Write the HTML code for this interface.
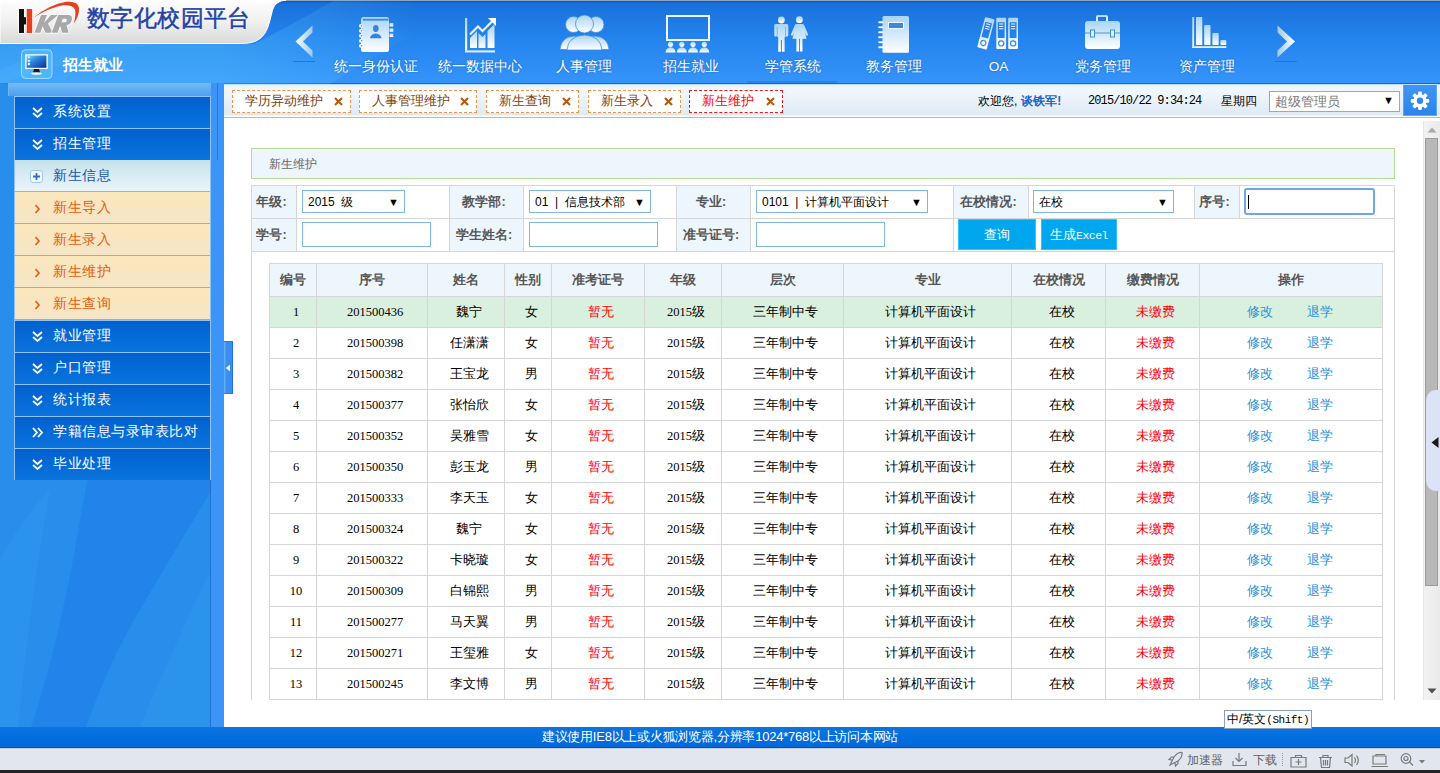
<!DOCTYPE html>
<html><head><meta charset="utf-8">
<style>
*{margin:0;padding:0;box-sizing:border-box}
html,body{width:1440px;height:773px;overflow:hidden;font-family:"Liberation Sans",sans-serif;font-size:12px;color:#000;background:#fff}
.abs{position:absolute}
#hdr{position:absolute;left:0;top:0;width:1440px;height:84px;background:linear-gradient(#8aa4c4 0px,#8aa4c4 1px,#0f5ec4 1px,#0f5ec4 2px,#1a70da 3px,#2484ee 40px,#3594fa 82px)}
#hdr:after{content:"";position:absolute;left:0;right:0;bottom:0;height:1px;background:#1a66c8}
#logo{position:absolute;left:0;top:0;width:300px;height:44px}
.nav{position:absolute;top:0;width:104px;height:83px;text-align:center;color:#fff;font-size:13.6px}
.nav .lb{position:absolute;left:0;right:0;top:58px;line-height:18px;text-shadow:0 0 2px rgba(0,40,120,.5)}
.nav svg{position:absolute;left:0;top:0}
#side{position:absolute;left:0;top:84px;width:224px;height:643px;background:#2284e8}

#spanel{position:absolute;left:8px;top:83px;width:210px;height:13px;background:linear-gradient(#74bcf6,#4c9ff0);border-left:1px solid #70b8f4}
.mi{position:absolute;left:14px;width:197px;height:32px;font-size:14px;letter-spacing:0.5px;line-height:29px;color:#fff;padding-left:38px;white-space:nowrap}
.mb{background:linear-gradient(#0060d0,#0a74dc);border:1px solid #8ec4f4;border-bottom:none}
.mx{line-height:31px;background:linear-gradient(#c6e2ea,#eaf5fb);color:#1a52a8;border-left:1px solid #8ec4f4;border-right:1px solid #8ec4f4;border-bottom:1px solid #9ab8b0}
.mo{line-height:31px;background:linear-gradient(#fbe8bc,#f6e4c8);color:#e25c0e;border-left:1px solid #8ec4f4;border-right:1px solid #8ec4f4;border-bottom:1px solid #d8a070}
#tabbar{position:absolute;left:224px;top:84px;width:1216px;height:34px;background:linear-gradient(#a8d4f8 0px,#e8f2fc 1.5px,#f2f7fd 5px,#deeaf6 31px,#ffffff 32px,#ffffff 33px);border-bottom:1px solid #90c4f0}
.tab{position:absolute;top:90px;height:23px;border:1px dashed #f29448;background:#fff;color:#7a4212;font-size:12.5px;line-height:21px;padding-left:12px}
.tab b{position:absolute;right:7px;top:6px;width:9px;height:9px;line-height:0}
.tab b svg{display:block}
#main{position:absolute;left:224px;top:118px;width:1216px;height:609px;background:#fff}
#foot{position:absolute;left:0;top:727px;width:1440px;height:21px;background:linear-gradient(#0a74e2,#0068da);color:#fff;text-align:center;font-size:13px;letter-spacing:-0.25px;line-height:20px;border-bottom:1px solid #0050b8}
#sbar{position:absolute;left:0;top:748px;width:1440px;height:22px;background:#e2e6ee;border-top:1px solid #c8ccd4}
#blk{position:absolute;left:0;top:770px;width:1440px;height:3px;background:#222}
table{border-collapse:collapse}
.th{height:31px;line-height:31px;text-align:center;font-weight:bold;color:#555;font-size:12.5px}
.td{height:30px;line-height:30px;text-align:center;padding-left:6px;font-size:12.5px;color:#000;font-family:"Liberation Serif",serif}
.red{color:#f00}
.lk{color:#2b8fd6;width:auto!important;padding-left:0!important}


.lab{background:#eef6fd;color:#555;font-weight:bold;font-size:12.5px;text-align:center;white-space:nowrap;padding-right:5px}
.sel{height:23px;border:1px solid #7db8e0;background:#fff;font-size:12px;line-height:22px;padding-left:5px;color:#000;white-space:pre}
.sel .dd{position:absolute;right:5px;top:0;font-size:11px}
.btn{top:219px;height:31px;background:#00a6ee;border:1px solid #30c4ff;color:#fff;font-size:13px;line-height:29px;text-align:center;white-space:nowrap}
.hl{height:1px;background:#d6d6d6}
.vl{width:1px;background:#d6d6d6}
</style></head><body>
<div id="hdr"></div>
<svg class="abs" style="left:0;top:0" width="1440" height="84" viewBox="0 0 1440 84">
<defs>
<linearGradient id="lp" x1="0" y1="0" x2="0" y2="1"><stop offset="0" stop-color="#fefefe"/><stop offset=".5" stop-color="#f0f0f0"/><stop offset="1" stop-color="#d9d9d9"/></linearGradient>
<linearGradient id="ig" x1="0" y1="0" x2="0" y2="1"><stop offset="0" stop-color="#a9d4f8"/><stop offset="1" stop-color="#ffffff"/></linearGradient>
<linearGradient id="ag" x1="0" y1="0" x2="1" y2="0"><stop offset="0" stop-color="#ffffff"/><stop offset="1" stop-color="#9cc8ec"/></linearGradient>
<linearGradient id="ag2" x1="1" y1="0" x2="0" y2="0"><stop offset="0" stop-color="#ffffff"/><stop offset="1" stop-color="#9cc8ec"/></linearGradient>
<linearGradient id="sw" x1="0" y1="0" x2="1" y2="1"><stop offset="0" stop-color="#ffffff" stop-opacity=".18"/><stop offset="1" stop-color="#ffffff" stop-opacity="0"/></linearGradient>
</defs>
<linearGradient id="sw2" gradientUnits="userSpaceOnUse" x1="220" y1="70" x2="420" y2="10"><stop offset="0" stop-color="#60d0ff" stop-opacity=".30"/><stop offset=".55" stop-color="#60d0ff" stop-opacity=".14"/><stop offset="1" stop-color="#60d0ff" stop-opacity="0"/></linearGradient><path d="M0,84 L0,44 L255,44 Q300,20 335,0 L480,0 Q400,40 330,84 Z" fill="url(#sw2)"/><path d="M0,84 Q80,56 160,44 L60,44 Q20,60 0,70 Z" fill="#60d0ff" opacity=".12"/><path d="M0,0 H286 Q275,1 272.5,10 L269.5,22 Q266,36 257,40.5 Q251,43.5 240,43.5 H0 Z" fill="url(#lp)" stroke="#ffffff" stroke-width="1"/>
<!-- HKR logo -->
<g stroke="#ffffff" stroke-width="1.4" paint-order="stroke" stroke-linejoin="round">
<rect x="19" y="9" width="5" height="24" fill="#111"/>
<rect x="23.5" y="17.2" width="3" height="7.2" fill="#111" stroke="none"/>
<rect x="26.7" y="9" width="5.5" height="24" fill="#e8401c"/>
<path d="M34.4,32.8 L41.1,15 H47 L44,22.8 L51,15 H58.2 L48,23.5 L52.8,32.8 H45.6 L42.6,26.3 L40.4,32.8 Z" fill="#a9a9a9"/>
<path d="M51.7,32.8 L58.3,15 H68.5 Q72.6,15 71.9,19.6 Q71.1,24.6 66.6,25.3 L68.7,32.8 H62 L60.4,26.2 H59.9 L57.6,32.8 Z M61.5,22.2 H64.9 Q66.5,22.2 66.8,20.4 Q67.1,18.8 65.5,18.8 H62.8 Z" fill="#a9a9a9"/>
<path d="M32,18.8 Q50,4 66,1.8 Q78,0.6 79,8 Q79.6,15.5 73.5,24 Q76.3,15 75,9.5 Q73,4.8 63,5.3 Q49,7.5 32,18.8 Z" fill="#e8401c" stroke-width="1"/>
</g>
<!-- arrows -->
<path d="M312.5,25.5 L295.5,41.5 L312.5,57.5 L312.5,50.5 L303,41.5 L312.5,32.5 Z" fill="url(#ag)"/>
<rect x="293" y="61" width="22" height="1" fill="#2a5fa8" opacity=".6"/>
<path d="M1277.5,25.5 L1295,41.5 L1277.5,57.5 L1277.5,50.5 L1287,41.5 L1277.5,32.5 Z" fill="url(#ag2)"/>
<rect x="1275" y="61" width="22" height="1" fill="#2a5fa8" opacity=".6"/>
<rect x="747" y="81.5" width="90" height="1" fill="#1d5fb8" opacity=".6"/>
<g fill="url(#ig)">
<!-- 1 address book -->
<rect x="361" y="17" width="28" height="35" rx="2.5"/>
<rect x="389.5" y="23" width="3.8" height="3.6" rx=".6"/><rect x="389.5" y="28.2" width="3.8" height="3.6" rx=".6"/><rect x="389.5" y="33.4" width="3.8" height="3.6" rx=".6"/>
</g>
<g fill="#f0f8ff"><circle cx="360.8" cy="25.8" r="1.9"/><circle cx="360.8" cy="30.8" r="1.9"/><circle cx="360.8" cy="35.8" r="1.9"/><circle cx="360.8" cy="40.8" r="1.9"/><circle cx="360.8" cy="45.8" r="1.9"/></g><g fill="#4a94e0"><circle cx="361.6" cy="25.8" r=".7"/><circle cx="361.6" cy="30.8" r=".7"/><circle cx="361.6" cy="35.8" r=".7"/><circle cx="361.6" cy="40.8" r=".7"/><circle cx="361.6" cy="45.8" r=".7"/></g>
<rect x="363" y="18.8" width="25.5" height="1.8" fill="#3c88da"/>
<ellipse cx="375.8" cy="28.5" rx="2.8" ry="3.6" fill="#3784d6"/>
<path d="M370,38.3 Q370.5,34 375.8,33.6 Q381,34 381.5,38.3 Z" fill="#3784d6"/>
<!-- 2 chart -->
<g fill="url(#ig)">
<rect x="465" y="18" width="2.2" height="34"/>
<rect x="465" y="50.2" width="30" height="2.2"/>
<path d="M470,38 L477,31 L477,48 L470,48 Z"/>
<path d="M478.5,33 L482.5,37 L485.5,34 L485.5,48 L478.5,48 Z"/>
<path d="M487.5,31 L494.5,24 L494.5,48 L487.5,48 Z"/>
</g>
<polyline points="470,34.5 478,26.5 482.5,31 492,21.5" fill="none" stroke="#e6f2fd" stroke-width="2.2"/>
<path d="M488,18 L496,18 L496,26 Z" fill="#ffffff"/>
<!-- 3 people -->
<g fill="url(#ig)" stroke="#3d8ee0" stroke-width=".8">
<path d="M560,49.5 Q561,37 574,36 Q587,37 588,49.5 Z"/>
<path d="M581,49.5 Q582,37 595,36 Q608,37 609,49.5 Z"/>
<circle cx="573.5" cy="24.5" r="8"/>
<circle cx="596" cy="24.5" r="8"/>
<path d="M567,50 Q568,36 584.5,35 Q601,36 602,50 Z"/>
<circle cx="584.5" cy="24" r="9"/>
</g>
<!-- 4 screen -->
<rect x="667" y="16" width="42" height="24" fill="none" stroke="#eef6fe" stroke-width="2"/>
<g fill="url(#ig)">
<circle cx="670.5" cy="44.3" r="2.6"/><circle cx="681.8" cy="44.3" r="2.6"/><circle cx="693" cy="44.3" r="2.6"/><circle cx="704.3" cy="44.3" r="2.6"/>
<path d="M665.5,52.5 Q666,47.5 670.5,47.3 Q675,47.5 675.5,52.5 Z"/>
<path d="M676.8,52.5 Q677.3,47.5 681.8,47.3 Q686.3,47.5 686.8,52.5 Z"/>
<path d="M688,52.5 Q688.5,47.5 693,47.3 Q697.5,47.5 698,52.5 Z"/>
<path d="M699.3,52.5 Q699.8,47.5 704.3,47.3 Q708.8,47.5 709.3,52.5 Z"/>
</g>
<!-- 5 man woman -->
<g fill="url(#ig)">
<circle cx="781.4" cy="20" r="3.4"/>
<path d="M775.6,24 H787 Q788.3,24 788.3,25.4 V35.6 Q788.3,36.6 787,36.6 Q785.8,36.6 785.8,35.6 V37 H784.6 V51.8 H781.9 V40 H780.9 V51.8 H778.2 V37 H777 V35.6 Q777,36.6 775.6,36.6 Q774.3,36.6 774.3,35.6 V25.4 Q774.3,24 775.6,24 Z"/>
<circle cx="799.4" cy="19.7" r="3.4"/>
<path d="M796.4,24 H802.4 Q803.6,24 804.1,25.1 L808,34.2 Q808.4,35.4 807.2,35.6 Q806.4,35.8 806,35 L804.8,32.2 L806.6,38.7 H802.5 V51.5 H799.9 V38.7 H799 V51.5 H796.4 V38.7 H792.4 L794.2,32.2 L793,35 Q792.6,35.8 791.8,35.6 Q790.6,35.4 791,34.2 L794.9,25.1 Q795.3,24 796.4,24 Z"/>
</g>
<g stroke="#4a94e0" stroke-width=".7" opacity=".8"><path d="M777.2,27 V36.3 M785.5,27 V36.3"/></g>
<!-- 6 notebook -->
<g fill="url(#ig)">
<rect x="882.5" y="16" width="26.5" height="36.8" rx="1.5"/>
</g>
<g fill="#f4faff"><rect x="878.2" y="21.3" width="5" height="1.9" rx=".9"/><rect x="878.2" y="26.3" width="5" height="1.9" rx=".9"/><rect x="878.2" y="31.3" width="5" height="1.9" rx=".9"/><rect x="878.2" y="36.3" width="5" height="1.9" rx=".9"/><rect x="878.2" y="41.3" width="5" height="1.9" rx=".9"/><rect x="878.2" y="46.3" width="5" height="1.9" rx=".9"/></g>
<rect x="888.5" y="22.5" width="15" height="6" fill="#3b8ad9" stroke="#f0f8ff" stroke-width="1"/>
<!-- 7 binders -->
<defs><g id="bd">
<path d="M1,0.7 H9 Q9.9,0.7 9.9,1.6 V31 Q9.9,31.9 9,31.9 H1 Q0.1,31.9 0.1,31 V1.6 Q0.1,0.7 1,0.7 Z M1.6,5.2 V20.8 H8.4 V5.2 Z" fill="url(#ig)" fill-rule="evenodd"/>
<rect x="1.6" y="3.4" width="6.8" height="1.8" fill="#ffffff" opacity=".0"/>
<rect x="2.8" y="6.4" width="4.4" height="1" fill="#eaf4fd"/><rect x="2.8" y="8.8" width="4.4" height="1" fill="#eaf4fd"/><rect x="2.8" y="11.2" width="4.4" height="1" fill="#eaf4fd"/>
<circle cx="5" cy="26.3" r="2.6" fill="none" stroke="#3b8be0" stroke-width="1.2"/>
<circle cx="5" cy="26.3" r="1.1" fill="#fff"/>
</g></defs>
<g stroke="none">
<rect x="997.6" y="22.3" width="7" height="15.5" fill="none" stroke="#ffffff" stroke-width=".0"/>
</g>
<use href="#bd" transform="translate(985.3,16.3) rotate(15)"/>
<use href="#bd" transform="translate(996.2,17.1)"/>
<use href="#bd" transform="translate(1008.1,17.1)"/>
<!-- 8 briefcase -->
<g fill="url(#ig)">
<path d="M1096,21.5 V16.5 Q1096,15 1097.5,15 H1106.5 Q1108,15 1108,16.5 V21.5 H1106 V17 H1098 V21.5 Z"/>
<rect x="1085" y="21" width="35" height="28" rx="3"/>
</g>
<rect x="1085" y="32.5" width="35" height="1" fill="#4a95de"/>
<rect x="1090.5" y="30" width="4" height="7" fill="#e4f2fd" stroke="#3d8ee0" stroke-width="1"/>
<rect x="1110.5" y="30" width="4" height="7" fill="#e4f2fd" stroke="#3d8ee0" stroke-width="1"/>
<!-- 9 bar chart -->
<g fill="url(#ig)">
<rect x="1192.3" y="17" width="1.8" height="31"/>
<rect x="1192.3" y="46" width="34" height="2"/>
<rect x="1196" y="17" width="6.3" height="28" rx=".8"/>
<rect x="1204.2" y="25" width="6.3" height="20" rx=".8"/>
<rect x="1212.4" y="33" width="6.3" height="12" rx=".8"/>
<rect x="1220.5" y="40" width="5.8" height="5" rx=".8"/>
</g>
</svg>
<div class="abs" style="left:87px;top:6px;font-size:22.5px;line-height:26px;color:#1f42a6;-webkit-text-stroke:0.5px #1f42a6;letter-spacing:0.4px;text-shadow:0 0 2px #fff,0 0 2px #fff">数字化校园平台</div>
<div class="nav" style="left:324.0px"><div class="lb">统一身份认证</div></div>
<div class="nav" style="left:428.0px"><div class="lb">统一数据中心</div></div>
<div class="nav" style="left:532.0px"><div class="lb">人事管理</div></div>
<div class="nav" style="left:638.5px"><div class="lb">招生就业</div></div>
<div class="nav" style="left:740.5px"><div class="lb">学管系统</div></div>
<div class="nav" style="left:842.0px"><div class="lb">教务管理</div></div>
<div class="nav" style="left:946.5px"><div class="lb">OA</div></div>
<div class="nav" style="left:1050.5px"><div class="lb">党务管理</div></div>
<div class="nav" style="left:1155.0px"><div class="lb">资产管理</div></div>
<div id="side"></div>
<svg class="abs" style="left:0;top:84px" width="224" height="643" viewBox="0 84 224 643"><path d="M0,84 L150,84 Q120,300 80,520 Q60,640 31,727 L0,727 Z" fill="#44c4ff" opacity=".16"/><path d="M224,300 L224,727 L86,727 Q110,660 140,610 Q175,550 224,470 Z" fill="#44c4ff" opacity=".16"/><path d="M224,545 Q180,630 140,727 L224,727 Z" fill="#44c4ff" opacity=".12"/><path d="M0,727 L0,560 Q20,520 50,490 Q30,600 18,727 Z" fill="#44c4ff" opacity=".10"/></svg>
<div id="spanel"></div>
<div class="abs" style="left:211px;top:83px;width:13px;height:644px;background:#3c95f6"></div>
<div class="abs" style="left:210px;top:480px;width:1px;height:247px;background:#1f70d2"></div>
<div class="abs" style="left:217px;top:83px;width:1px;height:77px;background:#2a78d8"></div>
<svg class="abs" style="left:20px;top:48px" width="34" height="32" viewBox="20 48 34 32">
<defs><linearGradient id="scr" x1="0" y1="0" x2="1" y2="1"><stop offset="0" stop-color="#6ee0fa"/><stop offset=".45" stop-color="#2a7ed8"/><stop offset="1" stop-color="#0a2aa0"/></linearGradient></defs>
<rect x="21.5" y="49.8" width="30.5" height="28.6" rx="4" fill="#5cc4fa" fill-opacity=".55" stroke="#a6dcfc" stroke-width="1"/>
<rect x="25.2" y="54.2" width="22.6" height="14.8" fill="#f6fafe"/>
<rect x="26.6" y="55.5" width="19.8" height="12.3" fill="url(#scr)"/>
<rect x="28" y="56.5" width="1.8" height="1.6" fill="#fff"/><rect x="28" y="60" width="1.8" height="1.8" fill="#fff"/><rect x="28" y="63" width="1.8" height="2.2" fill="#fff"/>
<path d="M34,69 H39 L40.2,72.8 H32.8 Z" fill="#1a1a1a"/>
<ellipse cx="36.5" cy="73.6" rx="5.5" ry="1.3" fill="#e6eef6"/>
</svg>

<div class="abs" style="left:63px;top:56px;font-size:15px;line-height:18px;font-weight:bold;color:#fff">招生就业</div>
<div class="mi mb" style="top:96px"><svg class="abs" style="left:17px;top:10px" width="11" height="11" viewBox="0 0 11 11"><path d="M1,1 L5.5,5 L10,1 M1,6 L5.5,10 L10,6" fill="none" stroke="#fff" stroke-width="1.8"/></svg>系统设置</div>
<div class="mi mb" style="top:128px"><svg class="abs" style="left:17px;top:10px" width="11" height="11" viewBox="0 0 11 11"><path d="M1,1 L5.5,5 L10,1 M1,6 L5.5,10 L10,6" fill="none" stroke="#fff" stroke-width="1.8"/></svg>招生管理</div>
<div class="mi mx" style="top:160px"><svg class="abs" style="left:15px;top:10px" width="13" height="13" viewBox="0 0 13 13"><rect x=".5" y=".5" width="12" height="12" rx="2.5" fill="#f4faff" stroke="#9cc8f4"/><path d="M3,6.5 H10 M6.5,3 V10" stroke="#2e6fd0" stroke-width="1.8"/></svg>新生信息</div>
<div class="mi mo" style="top:192px"><svg class="abs" style="left:19px;top:11.5px" width="7" height="10" viewBox="0 0 7 10"><path d="M1.5,1 L5,5 L1.5,9" fill="none" stroke="#e25c0e" stroke-width="1.6"/></svg>新生导入</div>
<div class="mi mo" style="top:224px"><svg class="abs" style="left:19px;top:11.5px" width="7" height="10" viewBox="0 0 7 10"><path d="M1.5,1 L5,5 L1.5,9" fill="none" stroke="#e25c0e" stroke-width="1.6"/></svg>新生录入</div>
<div class="mi mo" style="top:256px"><svg class="abs" style="left:19px;top:11.5px" width="7" height="10" viewBox="0 0 7 10"><path d="M1.5,1 L5,5 L1.5,9" fill="none" stroke="#e25c0e" stroke-width="1.6"/></svg>新生维护</div>
<div class="mi mo" style="top:288px"><svg class="abs" style="left:19px;top:11.5px" width="7" height="10" viewBox="0 0 7 10"><path d="M1.5,1 L5,5 L1.5,9" fill="none" stroke="#e25c0e" stroke-width="1.6"/></svg>新生查询</div>
<div class="mi mb" style="top:320px"><svg class="abs" style="left:17px;top:10px" width="11" height="11" viewBox="0 0 11 11"><path d="M1,1 L5.5,5 L10,1 M1,6 L5.5,10 L10,6" fill="none" stroke="#fff" stroke-width="1.8"/></svg>就业管理</div>
<div class="mi mb" style="top:352px"><svg class="abs" style="left:17px;top:10px" width="11" height="11" viewBox="0 0 11 11"><path d="M1,1 L5.5,5 L10,1 M1,6 L5.5,10 L10,6" fill="none" stroke="#fff" stroke-width="1.8"/></svg>户口管理</div>
<div class="mi mb" style="top:384px"><svg class="abs" style="left:17px;top:10px" width="11" height="11" viewBox="0 0 11 11"><path d="M1,1 L5.5,5 L10,1 M1,6 L5.5,10 L10,6" fill="none" stroke="#fff" stroke-width="1.8"/></svg>统计报表</div>
<div class="mi mb" style="top:416px"><svg class="abs" style="left:17px;top:10px" width="12" height="11" viewBox="0 0 12 11"><path d="M1,1 L5,5.5 L1,10 M6,1 L10,5.5 L6,10" fill="none" stroke="#fff" stroke-width="1.8"/></svg>学籍信息与录审表比对</div>
<div class="mi mb" style="top:448px"><svg class="abs" style="left:17px;top:10px" width="11" height="11" viewBox="0 0 11 11"><path d="M1,1 L5.5,5 L10,1 M1,6 L5.5,10 L10,6" fill="none" stroke="#fff" stroke-width="1.8"/></svg>毕业处理</div>
<div id="tabbar"></div>
<div class="tab" style="left:232px;width:119px">学历异动维护<b><svg width="9" height="9" viewBox="0 0 9 9"><path d="M1,1 L8,8 M8,1 L1,8" stroke="#b45a0e" stroke-width="2.1"/></svg></b></div>
<div class="tab" style="left:359px;width:118px">人事管理维护<b><svg width="9" height="9" viewBox="0 0 9 9"><path d="M1,1 L8,8 M8,1 L1,8" stroke="#b45a0e" stroke-width="2.1"/></svg></b></div>
<div class="tab" style="left:486px;width:93px">新生查询<b><svg width="9" height="9" viewBox="0 0 9 9"><path d="M1,1 L8,8 M8,1 L1,8" stroke="#b45a0e" stroke-width="2.1"/></svg></b></div>
<div class="tab" style="left:588px;width:93px">新生录入<b><svg width="9" height="9" viewBox="0 0 9 9"><path d="M1,1 L8,8 M8,1 L1,8" stroke="#b45a0e" stroke-width="2.1"/></svg></b></div>
<div class="tab" style="left:689px;width:94px;border-color:#e41c1c;color:#f00">新生维护<b><svg width="9" height="9" viewBox="0 0 9 9"><path d="M1,1 L8,8 M8,1 L1,8" stroke="#b45a0e" stroke-width="2.1"/></svg></b></div>
<div class="abs" style="left:978px;top:93px;font-size:12px;line-height:16px;color:#000">欢迎您,<span style="color:#1f62c8;font-weight:bold;margin-left:4px">谈铁军!</span></div>
<div class="abs" style="left:1088px;top:93px;font-size:12px;letter-spacing:-0.9px;line-height:16px;color:#000;font-family:'Liberation Mono',monospace">2015/10/22 9:34:24</div>
<div class="abs" style="left:1221px;top:93px;font-size:12px;line-height:16px;color:#000">星期四</div>
<div class="abs" style="left:1269px;top:91px;width:131px;height:21px;border:1px solid #a6a6a6;background:#fff;color:#777;font-size:13px;line-height:19px;padding-left:5px">超级管理员<span style="position:absolute;right:5px;top:-1px;color:#000;font-size:11px">▼</span></div>
<div class="abs" style="left:1403px;top:85px;width:34px;height:31px;background:linear-gradient(#3f96f4,#2b84ea);border:1px solid #5aa8f8;border-top:none">
<svg width="32" height="31" viewBox="0 0 32 31" style="position:absolute;left:0;top:0"><g transform="translate(16,15.8)" fill="#fff">
<circle r="6.6"/>
<g id="th"><rect x="-1.9" y="-9.2" width="3.8" height="4.5" rx="1"/></g>
<use href="#th" transform="rotate(45)"/><use href="#th" transform="rotate(90)"/><use href="#th" transform="rotate(135)"/><use href="#th" transform="rotate(180)"/><use href="#th" transform="rotate(225)"/><use href="#th" transform="rotate(270)"/><use href="#th" transform="rotate(315)"/>
<circle r="3.2" fill="#3189ee"/>
</g></svg></div>

<div id="main"></div>
<svg class="abs" style="left:224px;top:341px" width="9" height="53" viewBox="0 0 9 53"><rect x="0" y="0" width="9" height="53" fill="#3a8ef2"/><rect x="0" y="0" width="1.5" height="53" fill="#62acf8"/><rect x="8" y="0" width="1" height="53" fill="#1f6fe0"/><rect x="0" y="0" width="9" height="1" fill="#2a7de8"/><rect x="0" y="52" width="9" height="1" fill="#2a7de8"/><path d="M6,23.5 L2,27 L6,30.5 Z" fill="#fff"/></svg>
<div class="abs" style="left:251px;top:148px;width:1144px;height:31px;border:1px solid #b6dc95;background:#eef6fd;color:#666;font-size:12px;line-height:31px;padding-left:17px">新生维护</div>
<div class="abs" style="left:251px;top:185px;width:1144px;height:67px;border:1px solid #d6d6d6;background:#fff"></div>
<div class="abs lab" style="left:252px;top:186px;width:44px;height:32px;line-height:32px">年级:</div>
<div class="abs lab" style="left:450px;top:186px;width:73px;height:32px;line-height:32px">教学部:</div>
<div class="abs lab" style="left:677px;top:186px;width:73px;height:32px;line-height:32px">专业:</div>
<div class="abs lab" style="left:954px;top:186px;width:74px;height:32px;line-height:32px">在校情况:</div>
<div class="abs lab" style="left:1195px;top:186px;width:44px;height:32px;line-height:32px">序号:</div>
<div class="abs lab" style="left:252px;top:219px;width:44px;height:32px;line-height:32px">学号:</div>
<div class="abs lab" style="left:450px;top:219px;width:73px;height:32px;line-height:32px">学生姓名:</div>
<div class="abs lab" style="left:677px;top:219px;width:73px;height:32px;line-height:32px">准号证号:</div>
<div class="abs" style="left:252px;top:218px;width:1142px;height:1px;background:#d6d6d6"></div>
<div class="abs" style="left:296px;top:186px;width:1px;height:65px;background:#d6d6d6"></div>
<div class="abs" style="left:449px;top:186px;width:1px;height:65px;background:#d6d6d6"></div>
<div class="abs" style="left:523px;top:186px;width:1px;height:65px;background:#d6d6d6"></div>
<div class="abs" style="left:676px;top:186px;width:1px;height:65px;background:#d6d6d6"></div>
<div class="abs" style="left:750px;top:186px;width:1px;height:65px;background:#d6d6d6"></div>
<div class="abs" style="left:953px;top:186px;width:1px;height:65px;background:#d6d6d6"></div>
<div class="abs" style="left:1028px;top:186px;width:1px;height:32px;background:#d6d6d6"></div>
<div class="abs" style="left:1194px;top:186px;width:1px;height:32px;background:#d6d6d6"></div>
<div class="abs" style="left:1239px;top:186px;width:1px;height:32px;background:#d6d6d6"></div>
<div class="abs sel" style="left:302px;top:190px;width:103px">2015  级<span class="dd">▼</span></div>
<div class="abs sel" style="left:529px;top:190px;width:122px">01  |  信息技术部<span class="dd">▼</span></div>
<div class="abs sel" style="left:756px;top:190px;width:172px">0101  |  计算机平面设计<span class="dd">▼</span></div>
<div class="abs sel" style="left:1033px;top:190px;width:141px">在校<span class="dd">▼</span></div>
<div class="abs" style="left:1244px;top:188px;width:131px;height:27px;border:2px solid #6fa6e8;border-radius:3px;background:#fff"><div style="position:absolute;left:2px;top:5px;width:1px;height:14px;background:#000"></div></div>
<div class="abs" style="left:302px;top:222px;width:129px;height:25px;border:1px solid #7db8e0;background:#fff"></div>
<div class="abs" style="left:529px;top:222px;width:129px;height:25px;border:1px solid #7db8e0;background:#fff"></div>
<div class="abs" style="left:756px;top:222px;width:129px;height:25px;border:1px solid #7db8e0;background:#fff"></div>
<div class="abs btn" style="left:958px;width:78px">查询</div>
<div class="abs btn" style="left:1041px;width:76px">生成<span style="font-family:'Liberation Mono',monospace;font-size:11.5px;letter-spacing:-0.5px">Excel</span></div>
<div class="abs" style="left:251px;top:251px;width:1px;height:449px;background:#d6d6d6"></div>
<div class="abs" style="left:1394px;top:251px;width:1px;height:449px;background:#d6d6d6"></div>
<div class="abs" style="left:269px;top:263px;width:1114px;height:34px;background:#eef6fd"></div>
<div class="abs" style="left:269px;top:296px;width:1114px;height:32px;background:#d9f0de"></div>
<div class="abs hl" style="left:269px;top:263px;width:1114px"></div>
<div class="abs hl" style="left:269px;top:296px;width:1114px"></div>
<div class="abs hl" style="left:269px;top:327px;width:1114px"></div>
<div class="abs hl" style="left:269px;top:358px;width:1114px"></div>
<div class="abs hl" style="left:269px;top:389px;width:1114px"></div>
<div class="abs hl" style="left:269px;top:420px;width:1114px"></div>
<div class="abs hl" style="left:269px;top:451px;width:1114px"></div>
<div class="abs hl" style="left:269px;top:482px;width:1114px"></div>
<div class="abs hl" style="left:269px;top:513px;width:1114px"></div>
<div class="abs hl" style="left:269px;top:544px;width:1114px"></div>
<div class="abs hl" style="left:269px;top:575px;width:1114px"></div>
<div class="abs hl" style="left:269px;top:606px;width:1114px"></div>
<div class="abs hl" style="left:269px;top:637px;width:1114px"></div>
<div class="abs hl" style="left:269px;top:668px;width:1114px"></div>
<div class="abs hl" style="left:269px;top:699px;width:1114px"></div>
<div class="abs vl" style="left:269px;top:263px;height:437px"></div>
<div class="abs vl" style="left:316px;top:263px;height:437px"></div>
<div class="abs vl" style="left:427px;top:263px;height:437px"></div>
<div class="abs vl" style="left:504px;top:263px;height:437px"></div>
<div class="abs vl" style="left:551px;top:263px;height:437px"></div>
<div class="abs vl" style="left:644px;top:263px;height:437px"></div>
<div class="abs vl" style="left:721px;top:263px;height:437px"></div>
<div class="abs vl" style="left:843px;top:263px;height:437px"></div>
<div class="abs vl" style="left:1011px;top:263px;height:437px"></div>
<div class="abs vl" style="left:1105px;top:263px;height:437px"></div>
<div class="abs vl" style="left:1199px;top:263px;height:437px"></div>
<div class="abs vl" style="left:1382px;top:263px;height:437px"></div>
<div class="abs th" style="left:270px;top:264px;width:46px;height:32px;line-height:32px">编号</div>
<div class="abs th" style="left:317px;top:264px;width:110px;height:32px;line-height:32px">序号</div>
<div class="abs th" style="left:428px;top:264px;width:76px;height:32px;line-height:32px">姓名</div>
<div class="abs th" style="left:505px;top:264px;width:46px;height:32px;line-height:32px">性别</div>
<div class="abs th" style="left:552px;top:264px;width:92px;height:32px;line-height:32px">准考证号</div>
<div class="abs th" style="left:645px;top:264px;width:76px;height:32px;line-height:32px">年级</div>
<div class="abs th" style="left:722px;top:264px;width:121px;height:32px;line-height:32px">层次</div>
<div class="abs th" style="left:844px;top:264px;width:167px;height:32px;line-height:32px">专业</div>
<div class="abs th" style="left:1012px;top:264px;width:93px;height:32px;line-height:32px">在校情况</div>
<div class="abs th" style="left:1106px;top:264px;width:93px;height:32px;line-height:32px">缴费情况</div>
<div class="abs th" style="left:1200px;top:264px;width:182px;height:32px;line-height:32px">操作</div>
<div class="abs td" style="left:270px;top:297px;width:46px">1</div>
<div class="abs td" style="left:317px;top:297px;width:110px">201500436</div>
<div class="abs td" style="left:428px;top:297px;width:76px">魏宁</div>
<div class="abs td" style="left:505px;top:297px;width:46px">女</div>
<div class="abs td" style="left:552px;top:297px;width:92px"><span class="red">暂无</span></div>
<div class="abs td" style="left:645px;top:297px;width:76px">2015级</div>
<div class="abs td" style="left:722px;top:297px;width:121px">三年制中专</div>
<div class="abs td" style="left:844px;top:297px;width:167px">计算机平面设计</div>
<div class="abs td" style="left:1012px;top:297px;width:93px">在校</div>
<div class="abs td" style="left:1106px;top:297px;width:93px"><span class="red">未缴费</span></div>
<div class="abs td lk" style="left:1247px;top:297px">修改</div><div class="abs td lk" style="left:1307px;top:297px">退学</div>
<div class="abs td" style="left:270px;top:328px;width:46px">2</div>
<div class="abs td" style="left:317px;top:328px;width:110px">201500398</div>
<div class="abs td" style="left:428px;top:328px;width:76px">任潇潇</div>
<div class="abs td" style="left:505px;top:328px;width:46px">女</div>
<div class="abs td" style="left:552px;top:328px;width:92px"><span class="red">暂无</span></div>
<div class="abs td" style="left:645px;top:328px;width:76px">2015级</div>
<div class="abs td" style="left:722px;top:328px;width:121px">三年制中专</div>
<div class="abs td" style="left:844px;top:328px;width:167px">计算机平面设计</div>
<div class="abs td" style="left:1012px;top:328px;width:93px">在校</div>
<div class="abs td" style="left:1106px;top:328px;width:93px"><span class="red">未缴费</span></div>
<div class="abs td lk" style="left:1247px;top:328px">修改</div><div class="abs td lk" style="left:1307px;top:328px">退学</div>
<div class="abs td" style="left:270px;top:359px;width:46px">3</div>
<div class="abs td" style="left:317px;top:359px;width:110px">201500382</div>
<div class="abs td" style="left:428px;top:359px;width:76px">王宝龙</div>
<div class="abs td" style="left:505px;top:359px;width:46px">男</div>
<div class="abs td" style="left:552px;top:359px;width:92px"><span class="red">暂无</span></div>
<div class="abs td" style="left:645px;top:359px;width:76px">2015级</div>
<div class="abs td" style="left:722px;top:359px;width:121px">三年制中专</div>
<div class="abs td" style="left:844px;top:359px;width:167px">计算机平面设计</div>
<div class="abs td" style="left:1012px;top:359px;width:93px">在校</div>
<div class="abs td" style="left:1106px;top:359px;width:93px"><span class="red">未缴费</span></div>
<div class="abs td lk" style="left:1247px;top:359px">修改</div><div class="abs td lk" style="left:1307px;top:359px">退学</div>
<div class="abs td" style="left:270px;top:390px;width:46px">4</div>
<div class="abs td" style="left:317px;top:390px;width:110px">201500377</div>
<div class="abs td" style="left:428px;top:390px;width:76px">张怡欣</div>
<div class="abs td" style="left:505px;top:390px;width:46px">女</div>
<div class="abs td" style="left:552px;top:390px;width:92px"><span class="red">暂无</span></div>
<div class="abs td" style="left:645px;top:390px;width:76px">2015级</div>
<div class="abs td" style="left:722px;top:390px;width:121px">三年制中专</div>
<div class="abs td" style="left:844px;top:390px;width:167px">计算机平面设计</div>
<div class="abs td" style="left:1012px;top:390px;width:93px">在校</div>
<div class="abs td" style="left:1106px;top:390px;width:93px"><span class="red">未缴费</span></div>
<div class="abs td lk" style="left:1247px;top:390px">修改</div><div class="abs td lk" style="left:1307px;top:390px">退学</div>
<div class="abs td" style="left:270px;top:421px;width:46px">5</div>
<div class="abs td" style="left:317px;top:421px;width:110px">201500352</div>
<div class="abs td" style="left:428px;top:421px;width:76px">吴雅雪</div>
<div class="abs td" style="left:505px;top:421px;width:46px">女</div>
<div class="abs td" style="left:552px;top:421px;width:92px"><span class="red">暂无</span></div>
<div class="abs td" style="left:645px;top:421px;width:76px">2015级</div>
<div class="abs td" style="left:722px;top:421px;width:121px">三年制中专</div>
<div class="abs td" style="left:844px;top:421px;width:167px">计算机平面设计</div>
<div class="abs td" style="left:1012px;top:421px;width:93px">在校</div>
<div class="abs td" style="left:1106px;top:421px;width:93px"><span class="red">未缴费</span></div>
<div class="abs td lk" style="left:1247px;top:421px">修改</div><div class="abs td lk" style="left:1307px;top:421px">退学</div>
<div class="abs td" style="left:270px;top:452px;width:46px">6</div>
<div class="abs td" style="left:317px;top:452px;width:110px">201500350</div>
<div class="abs td" style="left:428px;top:452px;width:76px">彭玉龙</div>
<div class="abs td" style="left:505px;top:452px;width:46px">男</div>
<div class="abs td" style="left:552px;top:452px;width:92px"><span class="red">暂无</span></div>
<div class="abs td" style="left:645px;top:452px;width:76px">2015级</div>
<div class="abs td" style="left:722px;top:452px;width:121px">三年制中专</div>
<div class="abs td" style="left:844px;top:452px;width:167px">计算机平面设计</div>
<div class="abs td" style="left:1012px;top:452px;width:93px">在校</div>
<div class="abs td" style="left:1106px;top:452px;width:93px"><span class="red">未缴费</span></div>
<div class="abs td lk" style="left:1247px;top:452px">修改</div><div class="abs td lk" style="left:1307px;top:452px">退学</div>
<div class="abs td" style="left:270px;top:483px;width:46px">7</div>
<div class="abs td" style="left:317px;top:483px;width:110px">201500333</div>
<div class="abs td" style="left:428px;top:483px;width:76px">李天玉</div>
<div class="abs td" style="left:505px;top:483px;width:46px">女</div>
<div class="abs td" style="left:552px;top:483px;width:92px"><span class="red">暂无</span></div>
<div class="abs td" style="left:645px;top:483px;width:76px">2015级</div>
<div class="abs td" style="left:722px;top:483px;width:121px">三年制中专</div>
<div class="abs td" style="left:844px;top:483px;width:167px">计算机平面设计</div>
<div class="abs td" style="left:1012px;top:483px;width:93px">在校</div>
<div class="abs td" style="left:1106px;top:483px;width:93px"><span class="red">未缴费</span></div>
<div class="abs td lk" style="left:1247px;top:483px">修改</div><div class="abs td lk" style="left:1307px;top:483px">退学</div>
<div class="abs td" style="left:270px;top:514px;width:46px">8</div>
<div class="abs td" style="left:317px;top:514px;width:110px">201500324</div>
<div class="abs td" style="left:428px;top:514px;width:76px">魏宁</div>
<div class="abs td" style="left:505px;top:514px;width:46px">女</div>
<div class="abs td" style="left:552px;top:514px;width:92px"><span class="red">暂无</span></div>
<div class="abs td" style="left:645px;top:514px;width:76px">2015级</div>
<div class="abs td" style="left:722px;top:514px;width:121px">三年制中专</div>
<div class="abs td" style="left:844px;top:514px;width:167px">计算机平面设计</div>
<div class="abs td" style="left:1012px;top:514px;width:93px">在校</div>
<div class="abs td" style="left:1106px;top:514px;width:93px"><span class="red">未缴费</span></div>
<div class="abs td lk" style="left:1247px;top:514px">修改</div><div class="abs td lk" style="left:1307px;top:514px">退学</div>
<div class="abs td" style="left:270px;top:545px;width:46px">9</div>
<div class="abs td" style="left:317px;top:545px;width:110px">201500322</div>
<div class="abs td" style="left:428px;top:545px;width:76px">卡晓璇</div>
<div class="abs td" style="left:505px;top:545px;width:46px">女</div>
<div class="abs td" style="left:552px;top:545px;width:92px"><span class="red">暂无</span></div>
<div class="abs td" style="left:645px;top:545px;width:76px">2015级</div>
<div class="abs td" style="left:722px;top:545px;width:121px">三年制中专</div>
<div class="abs td" style="left:844px;top:545px;width:167px">计算机平面设计</div>
<div class="abs td" style="left:1012px;top:545px;width:93px">在校</div>
<div class="abs td" style="left:1106px;top:545px;width:93px"><span class="red">未缴费</span></div>
<div class="abs td lk" style="left:1247px;top:545px">修改</div><div class="abs td lk" style="left:1307px;top:545px">退学</div>
<div class="abs td" style="left:270px;top:576px;width:46px">10</div>
<div class="abs td" style="left:317px;top:576px;width:110px">201500309</div>
<div class="abs td" style="left:428px;top:576px;width:76px">白锦熙</div>
<div class="abs td" style="left:505px;top:576px;width:46px">男</div>
<div class="abs td" style="left:552px;top:576px;width:92px"><span class="red">暂无</span></div>
<div class="abs td" style="left:645px;top:576px;width:76px">2015级</div>
<div class="abs td" style="left:722px;top:576px;width:121px">三年制中专</div>
<div class="abs td" style="left:844px;top:576px;width:167px">计算机平面设计</div>
<div class="abs td" style="left:1012px;top:576px;width:93px">在校</div>
<div class="abs td" style="left:1106px;top:576px;width:93px"><span class="red">未缴费</span></div>
<div class="abs td lk" style="left:1247px;top:576px">修改</div><div class="abs td lk" style="left:1307px;top:576px">退学</div>
<div class="abs td" style="left:270px;top:607px;width:46px">11</div>
<div class="abs td" style="left:317px;top:607px;width:110px">201500277</div>
<div class="abs td" style="left:428px;top:607px;width:76px">马天翼</div>
<div class="abs td" style="left:505px;top:607px;width:46px">男</div>
<div class="abs td" style="left:552px;top:607px;width:92px"><span class="red">暂无</span></div>
<div class="abs td" style="left:645px;top:607px;width:76px">2015级</div>
<div class="abs td" style="left:722px;top:607px;width:121px">三年制中专</div>
<div class="abs td" style="left:844px;top:607px;width:167px">计算机平面设计</div>
<div class="abs td" style="left:1012px;top:607px;width:93px">在校</div>
<div class="abs td" style="left:1106px;top:607px;width:93px"><span class="red">未缴费</span></div>
<div class="abs td lk" style="left:1247px;top:607px">修改</div><div class="abs td lk" style="left:1307px;top:607px">退学</div>
<div class="abs td" style="left:270px;top:638px;width:46px">12</div>
<div class="abs td" style="left:317px;top:638px;width:110px">201500271</div>
<div class="abs td" style="left:428px;top:638px;width:76px">王玺雅</div>
<div class="abs td" style="left:505px;top:638px;width:46px">女</div>
<div class="abs td" style="left:552px;top:638px;width:92px"><span class="red">暂无</span></div>
<div class="abs td" style="left:645px;top:638px;width:76px">2015级</div>
<div class="abs td" style="left:722px;top:638px;width:121px">三年制中专</div>
<div class="abs td" style="left:844px;top:638px;width:167px">计算机平面设计</div>
<div class="abs td" style="left:1012px;top:638px;width:93px">在校</div>
<div class="abs td" style="left:1106px;top:638px;width:93px"><span class="red">未缴费</span></div>
<div class="abs td lk" style="left:1247px;top:638px">修改</div><div class="abs td lk" style="left:1307px;top:638px">退学</div>
<div class="abs td" style="left:270px;top:669px;width:46px">13</div>
<div class="abs td" style="left:317px;top:669px;width:110px">201500245</div>
<div class="abs td" style="left:428px;top:669px;width:76px">李文博</div>
<div class="abs td" style="left:505px;top:669px;width:46px">男</div>
<div class="abs td" style="left:552px;top:669px;width:92px"><span class="red">暂无</span></div>
<div class="abs td" style="left:645px;top:669px;width:76px">2015级</div>
<div class="abs td" style="left:722px;top:669px;width:121px">三年制中专</div>
<div class="abs td" style="left:844px;top:669px;width:167px">计算机平面设计</div>
<div class="abs td" style="left:1012px;top:669px;width:93px">在校</div>
<div class="abs td" style="left:1106px;top:669px;width:93px"><span class="red">未缴费</span></div>
<div class="abs td lk" style="left:1247px;top:669px">修改</div><div class="abs td lk" style="left:1307px;top:669px">退学</div>
<div class="abs" style="left:1423px;top:121px;width:17px;height:579px;background:linear-gradient(90deg,#f2f2f2,#eaeaea);border-left:1px solid #e6e6e6"></div>
<div class="abs" style="left:1425px;top:138px;width:13px;height:448px;background:#b8b8b8;border:1px solid #9c9c9c"></div>
<svg class="abs" style="left:1426px;top:126px" width="12" height="8"><path d="M1.5,6.5 L6,1.5 L10.5,6.5 Z" fill="#a8a8a8"/></svg>
<svg class="abs" style="left:1426px;top:687px" width="12" height="8"><path d="M1.5,1.5 L6,6.5 L10.5,1.5 Z" fill="#505050"/></svg>
<svg class="abs" style="left:1425px;top:390px" width="15" height="101" viewBox="0 0 15 101"><path d="M15,0 V101 H12 Q1,101 1,88 V13 Q1,0 12,0 Z" fill="#dce3f7"/><path d="M13.5,47 L6.5,52.5 L13.5,58 Z" fill="#1a1a1a"/></svg>
<div id="foot">建议使用IE8以上或火狐浏览器,分辨率1024*768以上访问本网站</div>
<div id="sbar"></div>
<div id="blk"></div>
<svg class="abs" style="left:1160px;top:748px" width="280" height="22" viewBox="1160 748 280 22"><g fill="none" stroke="#7a7a7a" stroke-width="1.2"><path d="M1170,765 L1174,757 Q1178,752 1182,752.5 Q1182.5,757 1178,761 L1170,765 Z M1172,760 L1169,759.5 L1171.5,757 L1174,757 M1175,763 L1175.5,766 L1178,763.5 L1178,761"/><path d="M1239,753 V761 M1235.5,758 L1239,761.5 L1242.5,758 M1233,761 V765.5 H1246 V761"/><path d="M1291,757.5 H1306 V767 H1291 Z M1295.5,757.5 V755.5 H1301.5 V757.5 M1298.5,759 V765 M1295.5,762 H1301.5"/><path d="M1319,757.5 H1332 M1323,757.5 V755.5 H1328 V757.5 M1320.5,757.5 L1321.5,767.5 H1329.5 L1330.5,757.5 M1323.5,760 V765.5 M1325.5,760 V765.5 M1327.5,760 V765.5"/><path d="M1345,758 H1348 L1352,754.5 V766 L1348,762.5 H1345 Z M1354.5,757.5 Q1356.5,760.2 1354.5,763 M1356.5,755.5 Q1360,760.2 1356.5,765"/><path d="M1373,756 H1386 V764 H1373 Z M1371.5,766.5 H1388 M1376,756 V754.5 H1385"/><circle cx="1406" cy="758.5" r="4.8"/><path d="M1409.5,762 L1413,765.5"/><circle cx="1406" cy="758.5" r="2"/></g><path d="M1419,760 H1425 L1422,763.5 Z" fill="#7a7a7a"/><path d="M1282.5,753 V767" stroke="#9a9a9a" stroke-width="1" stroke-dasharray="1,1"/></svg>
<div class="abs" style="left:1187px;top:752px;font-size:12px;line-height:16px;color:#606060">加速器</div>
<div class="abs" style="left:1253px;top:752px;font-size:12px;line-height:16px;color:#606060">下载</div>
<div class="abs" style="left:1224px;top:710px;width:88px;height:19px;border:1px solid #8aa0c0;background:#fff;font-size:12px;line-height:17px;padding-left:2px;white-space:nowrap">中/英文<span style="font-family:'Liberation Mono',monospace;font-size:11px;letter-spacing:-0.5px">(Shift)</span></div>
</body></html>
